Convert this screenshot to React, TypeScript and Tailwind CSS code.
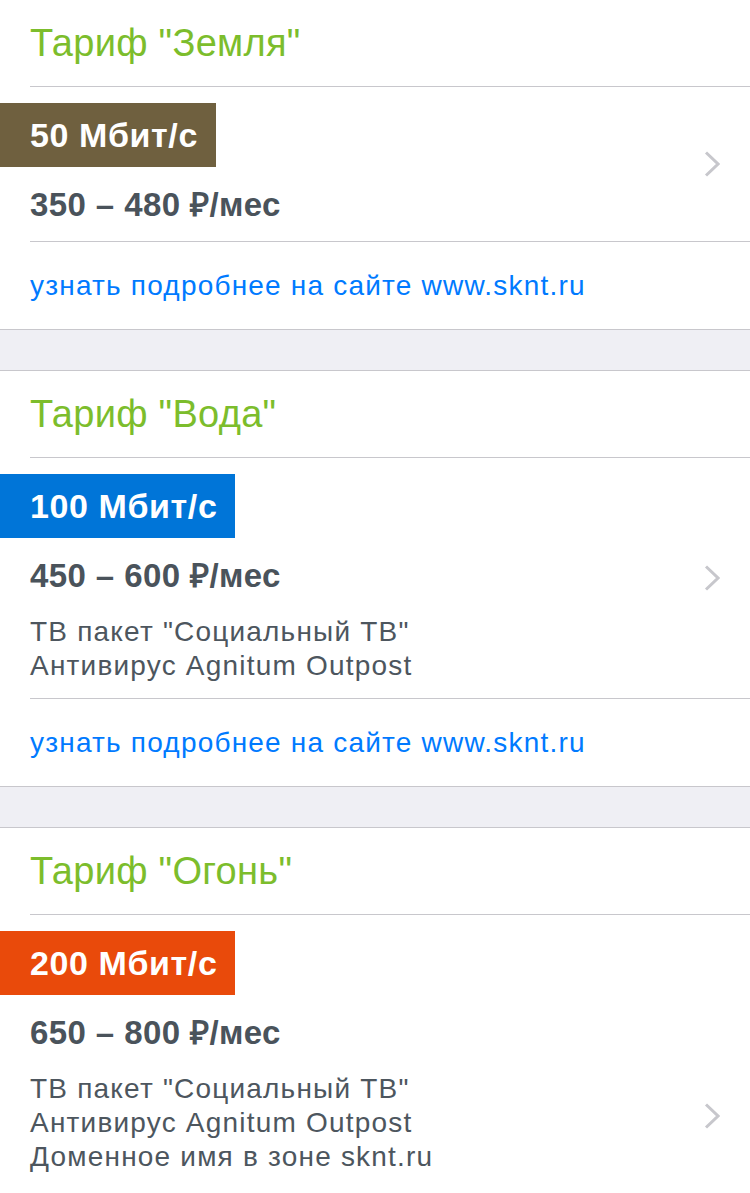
import React from 'react';

type Tariff = {
  name: string;
  speed: string;
  badgeClass: string;
  price: string;
  features: string[];
  link?: boolean;
  rowClass?: string;
};

const tariffs: Tariff[] = [
  {
    name: 'Тариф "Земля"',
    speed: '50 Мбит/с',
    badgeClass: 'bg-[#6f603f]',
    price: '350 – 480 ₽/мес',
    features: [],
    link: true
  },
  {
    name: 'Тариф "Вода"',
    speed: '100 Мбит/с',
    badgeClass: 'bg-[#0075d8]',
    price: '450 – 600 ₽/мес',
    features: ['ТВ пакет "Социальный ТВ"', 'Антивирус Agnitum Outpost'],
    link: true
  },
  {
    name: 'Тариф "Огонь"',
    speed: '200 Мбит/с',
    badgeClass: 'bg-[#e94a0b]',
    price: '650 – 800 ₽/мес',
    features: ['ТВ пакет "Социальный ТВ"', 'Антивирус Agnitum Outpost', 'Доменное имя в зоне sknt.ru'],
    rowClass: 'pb-[142px]'
  }
];

const Chevron = () => (
  <svg
    className="absolute right-[30px] top-1/2 -translate-y-1/2"
    width="16"
    height="27"
    viewBox="0 0 16 27"
    fill="none">
    <path d="M2 2 L14 13.5 L2 25" stroke="#c7c7cc" strokeWidth="3" />
  </svg>
);

const TariffCard = ({ tariff, first }: { tariff: Tariff; first: boolean }) => (
  <div className={`bg-white border-b border-[#c8c7cc] ${first ? '' : 'border-t'}`}>
    {/* title */}
    <div className="flex h-[86px] items-center pl-[30px] text-[38px] tracking-[0.3px] text-[#7cbd2c]">{tariff.name}</div>
    <div className="ml-[30px] h-px bg-[#c8c7cc]" />

    {/* main row */}
    <div className={`relative pt-4 ${tariff.features.length ? 'pb-[15px]' : 'pb-4'} ${tariff.rowClass || ''}`}>
      <div
        className={`inline-flex h-16 items-center pl-[30px] pr-[18px] text-[34px] font-bold tracking-[0.6px] text-white ${tariff.badgeClass}`}>
        {tariff.speed}
      </div>
      <div className="mt-[18px] pl-[30px] text-[33px] leading-[40px] font-semibold tracking-[0.4px] text-[#4a535b]">
        {tariff.price}
      </div>
      {tariff.features.length ? (
        <div className="mt-[19px] pl-[30px] text-[28px] leading-[34px] tracking-[1.2px] text-[#4d565e]">
          {tariff.features.map((f) => (
            <div key={f}>{f}</div>
          ))}
        </div>
      ) : null}
      <Chevron />
    </div>

    {/* link */}
    {tariff.link ? (
      <>
        <div className="ml-[30px] h-px bg-[#c8c7cc]" />
        <div className="flex h-[87px] items-center pl-[30px] text-[28px] tracking-[1.2px] text-[#007aff]">
          узнать подробнее на сайте www.sknt.ru
        </div>
      </>
    ) : null}
  </div>
);

export default function App() {
  return (
    <div className="min-h-[1193px] bg-[#efeff4] font-['Liberation_Sans',Arial,sans-serif]">
      <div className="flex flex-col gap-10">
        {tariffs.map((t, i) => (
          <TariffCard key={t.name} tariff={t} first={i === 0} />
        ))}
      </div>
    </div>
  );
}
